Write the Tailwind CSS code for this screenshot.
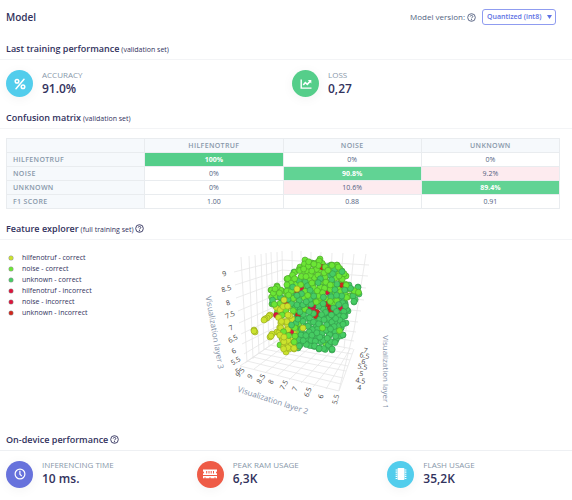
<!DOCTYPE html>
<html lang="en">
<head>
<meta charset="utf-8">
<title>Model</title>
<script src="https://cdn.jsdelivr.net/npm/@tailwindcss/browser@4"></script>
</head>
<body class="bg-white font-['Open_Sans',sans-serif] text-[#32325d]">
<svg class="hidden">
  <symbol id="help" viewBox="0 0 16 16"><circle cx="8" cy="8" r="6.8" fill="none" stroke="currentColor" stroke-width="1.6"/><path d="M5.7 6.3C5.8 3.6 10.3 3.6 10.3 6.3C10.3 8 8 8 8 9.6" fill="none" stroke="currentColor" stroke-width="1.7"/><circle cx="8" cy="11.8" r="1.1" fill="currentColor"/></symbol>
</svg>
<main class="flex flex-col">
  <header class="flex h-[38px] items-center justify-between pr-4 pb-1 pl-1.5">
    <h1 class="text-[10px] font-semibold">Model</h1>
    <div class="flex items-center text-[#525f7f]">
      <label for="version" class="text-[8px]">Model version:</label>
      <svg class="ml-0.5 size-[9px]"><use href="#help"/></svg>
      <div class="relative ml-1.5">
        <select id="version" class="block h-4 w-[74px] appearance-none rounded-[3px] border border-[#8f9cf0] bg-white pl-1 text-[7px] font-semibold text-[#5e72e4]"><option>Quantized (int8)</option></select>
        <svg class="pointer-events-none absolute top-1.5 right-1 h-1 w-[5px]" viewBox="0 0 5 4"><path d="M0 0h5L2.5 4z" fill="#5e72e4"/></svg>
      </div>
    </div>
  </header>

  <h2 class="flex h-[22px] items-baseline gap-0.5 border-b border-[#f3f4f6] px-1.5 text-[9px] leading-[21px] font-semibold">Last training performance <small class="text-[7px] font-normal">(validation set)</small></h2>
  <section class="grid h-[47px] grid-cols-2 items-center">
    <div class="flex items-center gap-[9px] pl-1.5">
      <div class="flex size-[27px] items-center justify-center rounded-full bg-[#52cdec] shadow-[0_2px_12px_#0000000d]">
        <svg class="size-3" viewBox="0 0 12 12" fill="none" stroke="#fff" stroke-width="1.5" stroke-linecap="round"><circle cx="3" cy="3.2" r="1.8"/><circle cx="9" cy="8.8" r="1.8"/><path d="M10 1.3L2 10.7"/></svg>
      </div>
      <div class="pb-0.5"><div class="text-[8px] leading-3 text-[#8898aa]">ACCURACY</div><div class="text-[12px] leading-4 font-semibold">91.0%</div></div>
    </div>
    <div class="flex items-center gap-[9px] pl-1.5">
      <div class="flex size-[27px] items-center justify-center rounded-full bg-[#55ce8a] shadow-[0_2px_12px_#0000000d]">
        <svg class="size-3" viewBox="0 0 12 12" fill="none" stroke="#fff" stroke-width="1.4"><path d="M1.2 1.5v8.6h10.3"/><path d="M3.3 7L5.3 4.6L7.3 6.4L10 3.4" stroke-width="1.6"/><path d="M7.8 2h3.5v3.5z" fill="#fff" stroke="none"/></svg>
      </div>
      <div class="pb-0.5"><div class="text-[8px] leading-3 text-[#8898aa]">LOSS</div><div class="text-[12px] leading-4 font-semibold">0,27</div></div>
    </div>
  </section>

  <h2 class="flex h-[22px] items-baseline gap-0.5 border-b border-[#f3f4f6] px-1.5 text-[9px] leading-[21px] font-semibold">Confusion matrix <small class="text-[7px] font-normal">(validation set)</small></h2>
  <section class="pt-[9px] pr-3 pb-[9px] pl-1.5">
    <table class="w-full table-fixed border-collapse text-center text-[7px] leading-[13px] text-[#525f7f] [&_td]:border [&_td]:border-[#e9ecef] [&_td]:p-0 [&_th]:border [&_th]:border-[#e9ecef] [&_th]:bg-[#f6f9fc] [&_th]:p-0 [&_th]:font-semibold [&_th]:tracking-wider [&_th]:text-[#8898aa]">
      <thead><tr><th></th><th scope="col">HILFENOTRUF</th><th scope="col">NOISE</th><th scope="col">UNKNOWN</th></tr></thead>
      <tbody class="[&_th]:text-left [&_th]:pl-1.5!">
        <tr><th scope="row">HILFENOTRUF</th><td class="bg-[#55ce8a] font-bold text-white">100%</td><td>0%</td><td>0%</td></tr>
        <tr><th scope="row">NOISE</th><td>0%</td><td class="bg-[#61d394] font-bold text-white">90.8%</td><td class="bg-[#fdebef]">9.2%</td></tr>
        <tr><th scope="row">UNKNOWN</th><td>0%</td><td class="bg-[#fdebef]">10.6%</td><td class="bg-[#61d394] font-bold text-white">89.4%</td></tr>
        <tr><th scope="row">F1 SCORE</th><td>1.00</td><td>0.88</td><td>0.91</td></tr>
      </tbody>
    </table>
  </section>

  <h2 class="flex h-[22px] items-baseline gap-0.5 border-b border-[#f3f4f6] px-1.5 text-[9px] leading-[21px] font-semibold">Feature explorer <small class="text-[7px] font-normal">(full training set)</small><svg class="size-[9px] self-center"><use href="#help"/></svg></h2>
  <section class="flex h-[189px] pl-[9px]">
    <ul class="w-[186px] shrink-0 pt-3 text-[7px] leading-[11px] [&_li]:flex [&_li]:items-center [&_li]:gap-[9px] [&_i]:size-1 [&_i]:rounded-full [&_i]:ring-[0.5px] [&_i]:ring-black/40">
      <li><i class="bg-[#cbe32d]"></i>hilfenotruf - correct</li>
      <li><i class="bg-[#6be635]"></i>noise - correct</li>
      <li><i class="bg-[#46cc63]"></i>unknown - correct</li>
      <li><i class="bg-[#dc143c]"></i>hilfenotruf - incorrect</li>
      <li><i class="bg-[#dc143c]"></i>noise - incorrect</li>
      <li><i class="bg-[#d0261c]"></i>unknown - incorrect</li>
    </ul>
    <svg class="h-[189px] w-[215px]" viewBox="195 240 215 189" role="img" aria-label="Feature explorer 3D scatter plot">
      <g fill="none" stroke="#e6e6e6" stroke-width="0.8">
        <path d="M241 257L247 362M249 256L253 359M255 255L259 354M261 254L264 350M266 253L269 347M271 252L274 342M277 252L279 339M282 251L284 336M292 251L293 336M301 251L302 338M311 252V340M321 252L319 342M332 253L328 344M343 253L336 346M354 254L344 348M366 254L354 330L339 390"/>
        <path d="M234 272L282 260L369 265M235 285L282 270L368 276M236 298L282 281L366 288M238 311L283 292L364 300M239 323L283 303L361 311M241 334L283 314L358 322M242 344L284 323L356 332M244 354L284 330L354 341M245 363L284 336L353 349"/>
        <path d="M240 366L284 336M254 369L295 338M265 373L306 340M277 376L316 342M289 380L326 344M301 383L336 346M313 387L345 348M326 389L350 349M339 391L354 349"/>
        <path d="M240 366L339 391M247 361L341 384M253 357L343 378M258 353L346 371M264 349L348 366M270 345L350 360M277 341L352 354"/>
      </g>
      <g id="points" stroke-width="0.6"></g>
      <g font-size="7" fill="#444" text-anchor="middle">
        <text transform="translate(225 276) rotate(-15)">9</text><text transform="translate(227 291) rotate(-17)">8.5</text><text transform="translate(229 305) rotate(-20)">8</text><text transform="translate(231 317) rotate(-23)">7.5</text><text transform="translate(232 330) rotate(-25)">7</text><text transform="translate(234 341) rotate(-28)">6.5</text><text transform="translate(235 353) rotate(-30)">6</text><text transform="translate(237 363) rotate(-32)">5.5</text><text transform="translate(239 373) rotate(-36)">5</text>
        <text transform="translate(242 374) rotate(-50)">9.5</text><text transform="translate(252 378) rotate(-54)">9</text><text transform="translate(263 380) rotate(-57)">8.5</text><text transform="translate(273 383) rotate(-60)">8</text><text transform="translate(286 386) rotate(-62)">7.5</text><text transform="translate(297 390) rotate(-65)">7</text><text transform="translate(310 393) rotate(-68)">6.5</text><text transform="translate(323 397) rotate(-72)">6</text><text transform="translate(338 400) rotate(-76)">5.5</text>
        <text transform="translate(365 353) rotate(12)">7</text><text transform="translate(364 358) rotate(12)">6.5</text><text transform="translate(363 364) rotate(11)">6</text><text transform="translate(362 369) rotate(10)">5.5</text><text transform="translate(361 376) rotate(9)">5</text><text transform="translate(360 383) rotate(8)">4.5</text><text transform="translate(359 390) rotate(7)">4</text>
      </g>
      <g font-size="8" fill="#8391a8" text-anchor="middle">
        <text transform="translate(212 333) rotate(80)">Visualization layer 3</text>
        <text transform="translate(272 403) rotate(18)">Visualization layer 2</text>
        <text transform="translate(383 372) rotate(90)">Visualization layer 1</text>
      </g>
    </svg>
  </section>

  <h2 class="flex h-[22px] items-baseline gap-0.5 border-b border-[#eef0f3] px-1.5 text-[9px] leading-[21px] font-semibold">On-device performance <svg class="size-[9px] self-center"><use href="#help"/></svg></h2>
  <section class="grid h-[46px] grid-cols-3 items-center">
    <div class="flex items-center gap-[9px] pl-1.5">
      <div class="flex size-[27px] items-center justify-center rounded-full bg-[#6772dc] shadow-[0_2px_12px_#0000000d]">
        <svg class="size-3" viewBox="0 0 12 12" fill="none" stroke="#fff" stroke-width="1.2"><circle cx="6" cy="6" r="4.9"/><path d="M5.9 2.8v3.4l1.9 1.9"/></svg>
      </div>
      <div class="pb-0.5"><div class="text-[8px] leading-3 text-[#8898aa]">INFERENCING TIME</div><div class="text-[12px] leading-4 font-semibold">10 ms.</div></div>
    </div>
    <div class="flex items-center gap-[9px] pl-1.5">
      <div class="flex size-[27px] items-center justify-center rounded-full bg-[#ee5b46] shadow-[0_2px_12px_#0000000d]">
        <svg class="h-2.5 w-3.5" viewBox="0 0 14 10"><path fill="#fff" fill-rule="evenodd" d="M0 .5h14v2a1 1 0 0 0 0 2V6H0V4.5a1 1 0 0 0 0-2zM3.2 2v2.6h1V2zM5.5 2v2.6h1V2zM7.7 2v2.6h1V2zM10 2v2.6h1V2zM0 7h14v2.2h-1.5V8.3h-1v.9h-4V8.3h-1v.9h-4V8.3h-1v.9H0z"/></svg>
      </div>
      <div class="pb-0.5"><div class="text-[8px] leading-3 text-[#8898aa]">PEAK RAM USAGE</div><div class="text-[12px] leading-4 font-semibold">6,3K</div></div>
    </div>
    <div class="flex items-center gap-[9px] pl-1.5">
      <div class="flex size-[27px] items-center justify-center rounded-full bg-[#52cdec] shadow-[0_2px_12px_#0000000d]">
        <svg class="size-3" viewBox="0 0 12 12"><rect x="2.5" y="0" width="7" height="12" rx="1" fill="#fff"/><path d="M1.4 1.5v9.5M10.6 1.5v9.5" stroke="#fff" stroke-width="1.6" stroke-dasharray="1.1 1"/></svg>
      </div>
      <div class="pb-0.5"><div class="text-[8px] leading-3 text-[#8898aa]">FLASH USAGE</div><div class="text-[12px] leading-4 font-semibold">35,2K</div></div>
    </div>
  </section>
</main>
<script>
  // Cloud outline; classes separate by region inside it.
  const hull = [[305,260],[312,263],[320,259],[323,265],[331,265],[337,265],[342,271],[346,276],[341,282],[349,285],[351,289],[358,287],[359,294],[354,302],[349,296],[345,303],[348,311],[345,316],[346,323],[341,328],[343,335],[336,340],[332,350],[319,349],[313,346],[300,345],[298,348],[286,352],[280,345],[282,338],[277,332],[281,322],[277,315],[276,306],[272,304],[271,290],[277,286],[282,291],[281,298],[286,299],[287,279],[294,272],[300,267]];
  const inside = (x, y) => {
    let c = false;
    for (let i = 0, j = hull.length - 1; i < hull.length; j = i++) {
      const [a, b] = hull[i], [p, q] = hull[j];
      if ((b > y) !== (q > y) && x < (p - a) * (y - b) / (q - b) + a) c = !c;
    }
    return c;
  };
  let seed = 7;
  const rnd = () => (seed = (seed * 16807) % 2147483647) / 2147483647;
  const g = document.getElementById('points');
  const fills = { y: ['#cbe32d', '#96a822'], l: ['#6be635', '#4ba12b'], g: ['#46cc63', '#31974a'], c: ['#dc143c', '#a51c38'], r: ['#d0261c', '#9b2a20'] };
  const dot = (x, y, k, r = 3) => {
    const e = document.createElementNS('http://www.w3.org/2000/svg', 'circle');
    e.setAttribute('cx', x); e.setAttribute('cy', y); e.setAttribute('r', r);
    e.setAttribute('fill', fills[k][0]); e.setAttribute('stroke', fills[k][1]);
    g.appendChild(e);
  };
  const reds = [[322,267,'r'],[301,288,'c'],[297,291,'r'],[327,292,'c'],[342,285,'r'],[286,303,'r'],[276,315,'c'],[298,315,'r'],[311,308,'c'],[315,305,'c'],[317,312,'r'],[316,316,'r'],[327,304,'r'],[330,308,'r'],[341,308,'c'],[291,332,'c'],[313,310,'c'],[331,311,'r']];
  const pick = (x, y) => {
    const t = rnd(), edge = 313 - (x - 290) * 0.2;
    if (x < 288 + (y > 338 ? 10 : 0) && y > 306) return t < 0.85 ? 'y' : 'l';
    if (x < 296 && y > 306) return t < 0.3 ? 'y' : t < 0.7 ? 'l' : 'g';
    if (y < edge - 20) return t < 0.83 ? 'l' : 'g';
    if (y < edge) return t < 0.5 ? 'l' : 'g';
    return t < 0.93 ? 'g' : 'l';
  };
  hull.forEach(([x, y]) => dot(x, y, pick(x, y)));
  // Keep a minimum spacing in each layer so that single markers stay readable.
  for (let layer = 0; layer < 2; layer++) {
    const done = [];
    for (let n = 0; n < 5000; n++) {
      const x = 270 + rnd() * 90, y = 258 + rnd() * 96;
      if (!inside(x, y) || done.some(p => Math.hypot(p[0] - x, p[1] - y) < 4.2)) continue;
      if (layer && reds.some(p => Math.hypot(p[0] - x, p[1] - y) < 3.2)) continue;
      done.push([x, y]);
      dot(x, y, pick(x, y));
    }
    if (!layer) reds.forEach(p => dot(...p, 2.6));
  }
  [[297,289],[284,300],[303,328],[288,315],[270,315],[269,316],[267,318],[265,319],[264,320],[254,330],[255,332],[254,331],[272,334],[270,337],[271,336]].forEach(([x, y]) => dot(x, y, 'y'));
</script>
</body>
</html>
